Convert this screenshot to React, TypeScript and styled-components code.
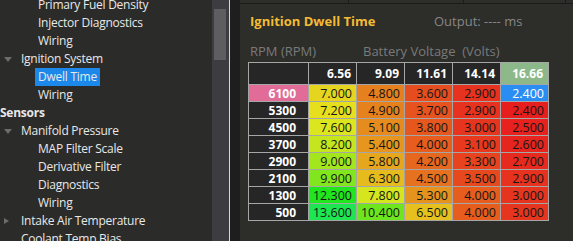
import React from "react";
import styled, { createGlobalStyle } from "styled-components";

const GlobalStyle = createGlobalStyle`
  html, body {
    margin: 0;
    padding: 0;
    background: #2b2b29;
  }
  body {
    font-family: "Open Sans", "Noto Sans", sans-serif;
  }
`;

type TreeItem = {
  label: string;
  level: 0 | 1 | 2;
  toggle?: "open" | "closed";
  selected?: boolean;
};

const tree: TreeItem[] = [
  { label: "Primary Fuel Density", level: 2 },
  { label: "Injector Diagnostics", level: 2 },
  { label: "Wiring", level: 2 },
  { label: "Ignition System", level: 1, toggle: "open" },
  { label: "Dwell Time", level: 2, selected: true },
  { label: "Wiring", level: 2 },
  { label: "Sensors", level: 0 },
  { label: "Manifold Pressure", level: 1, toggle: "open" },
  { label: "MAP Filter Scale", level: 2 },
  { label: "Derivative Filter", level: 2 },
  { label: "Diagnostics", level: 2 },
  { label: "Wiring", level: 2 },
  { label: "Intake Air Temperature", level: 1, toggle: "closed" },
  { label: "Coolant Temp Bias", level: 1 },
];

const voltages = ["6.56", "9.09", "11.61", "14.14", "16.66"];
const rows: { rpm: string; values: number[] }[] = [
  { rpm: "6100", values: [7.0, 4.8, 3.6, 2.9, 2.4] },
  { rpm: "5300", values: [7.2, 4.9, 3.7, 2.9, 2.4] },
  { rpm: "4500", values: [7.6, 5.1, 3.8, 3.0, 2.5] },
  { rpm: "3700", values: [8.2, 5.4, 4.0, 3.1, 2.6] },
  { rpm: "2900", values: [9.0, 5.8, 4.2, 3.3, 2.7] },
  { rpm: "2100", values: [9.9, 6.3, 4.5, 3.5, 2.9] },
  { rpm: "1300", values: [12.3, 7.8, 5.3, 4.0, 3.0] },
  { rpm: "500", values: [13.6, 10.4, 6.5, 4.0, 3.0] },
];

// operating point
const activeRow = 0;
const activeCol = 4;

const MIN = 2.4;
const MAX = 13.6;
const hueFor = (v: number) => ((v - MIN) / (MAX - MIN)) * 135;

export default function App() {
  return (
    <>
      <GlobalStyle />
      <Shell>
        <Sidebar>
          <TreeList>
            {tree.map((item, i) => (
              <TreeRow key={i} $level={item.level}>
                {item.level === 1 ? (
                  <Toggle>{item.toggle ? <Arrow $open={item.toggle === "open"} /> : null}</Toggle>
                ) : null}
                <TreeLabel $selected={!!item.selected} $bold={item.level === 0}>
                  {item.label}
                </TreeLabel>
              </TreeRow>
            ))}
          </TreeList>
        </Sidebar>
        <ScrollTrack>
          <ScrollThumb />
        </ScrollTrack>
        <Divider />
        <Gutter />
        <Panel>
          <TopStrip>
            <StripCell $w={108} />
            <StripCell $w={114} />
            <StripCell $w={101} />
            <StripCell $w={10} />
          </TopStrip>
          <PanelHeader>
            <Title>Ignition Dwell Time</Title>
            <Output>Output: ---- ms</Output>
          </PanelHeader>
          <AxisRow>
            <AxisLabel $w={113}>RPM (RPM)</AxisLabel>
            <AxisLabel>Battery Voltage  (Volts)</AxisLabel>
          </AxisRow>
          <Table>
            <HeadCell />
            {voltages.map((v, c) => (
              <HeadCell key={v} $active={c === activeCol}>
                {v}
              </HeadCell>
            ))}
            {rows.map((row, r) => (
              <React.Fragment key={row.rpm}>
                <RowLabel $active={r === activeRow}>{row.rpm}</RowLabel>
                {row.values.map((v, c) => (
                  <DataCell key={c} $hue={hueFor(v)} $active={r === activeRow && c === activeCol}>
                    {v.toFixed(3)}
                  </DataCell>
                ))}
              </React.Fragment>
            ))}
          </Table>
        </Panel>
      </Shell>
    </>
  );
}

const Shell = styled.div`
  display: flex;
  width: 573px;
  height: 241px;
  overflow: hidden;
  background: #2b2b29;
`;

const Sidebar = styled.div`
  width: 212px;
  flex-shrink: 0;
  overflow: hidden;
`;

const TreeList = styled.ul`
  list-style: none;
  margin: -4px 0 0;
  padding: 0;
`;

const TreeRow = styled.li<{ $level: number }>`
  display: flex;
  align-items: center;
  height: 18px;
  padding-left: ${(p) => (p.$level === 2 ? 35 : 0)}px;
  white-space: nowrap;
`;

const Toggle = styled.span`
  display: flex;
  align-items: center;
  justify-content: center;
  width: 15px;
  height: 18px;
  margin-right: 3px;
`;

const Arrow = styled.span<{ $open: boolean }>`
  width: 0;
  height: 0;
  ${(p) =>
    p.$open
      ? `border-left: 4px solid transparent;
         border-right: 4px solid transparent;
         border-top: 5px solid #6c6c6c;`
      : `border-top: 3.5px solid transparent;
         border-bottom: 3.5px solid transparent;
         border-left: 5px solid #6c6c6c;
         margin-left: -2px;`}
`;

const TreeLabel = styled.span<{ $selected: boolean; $bold: boolean }>`
  display: inline-block;
  height: 18px;
  line-height: 18px;
  padding: 0 3px;
  margin-left: ${(p) => (p.$bold ? -3 : 0)}px;
  font-size: 12px;
  letter-spacing: -0.25px;
  font-weight: ${(p) => (p.$bold ? 700 : 400)};
  color: #e8e8e8;
  background: ${(p) => (p.$selected ? "#1b88ea" : "transparent")};
`;

const ScrollTrack = styled.div`
  width: 17px;
  flex-shrink: 0;
  background: #3d3c41;
  display: flex;
  flex-direction: column;
  padding: 9px 3px 0 2px;
  box-sizing: border-box;
`;

const ScrollThumb = styled.div`
  height: 51px;
  background: #5e5e60;
`;

const Divider = styled.div`
  width: 1px;
  flex-shrink: 0;
  background: #d6d6d6;
`;

const Gutter = styled.div`
  width: 10px;
  flex-shrink: 0;
  background: #1e1e1e;
`;

const Panel = styled.div`
  flex: 1;
  display: flex;
  flex-direction: column;
  background: #2d2d2a;
  padding-left: 8px;
  min-width: 0;
`;

const TopStrip = styled.div`
  display: flex;
  height: 3px;
  margin-left: -8px;
  border-bottom: 1px solid #1b1b1b;
`;

const StripCell = styled.div<{ $w: number }>`
  width: ${(p) => p.$w}px;
  flex-shrink: 0;
  border-right: 1px solid #1b1b1b;
`;

const PanelHeader = styled.div`
  display: flex;
  align-items: center;
  height: 18px;
  margin-top: 8px;
  padding-left: 2px;
`;

const Title = styled.div`
  width: 184px;
  font-size: 13px;
  font-weight: 700;
  color: #f4bb34;
`;

const Output = styled.div`
  font-size: 13px;
  color: #868686;
`;

const AxisRow = styled.div`
  display: flex;
  align-items: center;
  height: 18px;
  margin-top: 12px;
  padding-left: 2px;
`;

const AxisLabel = styled.div<{ $w?: number }>`
  ${(p) => (p.$w ? `width: ${p.$w}px;` : "")}
  font-size: 13px;
  color: #7a7a7a;
  white-space: pre;
`;

const Table = styled.div`
  display: grid;
  grid-template-columns: 59px repeat(5, 47px);
  grid-template-rows: 21px repeat(8, 16px);
  gap: 1px;
  padding: 1px;
  width: max-content;
  margin-top: 2px;
  background: #a6a6a6;
`;

const HeadCell = styled.div<{ $active?: boolean }>`
  display: flex;
  align-items: center;
  justify-content: flex-end;
  padding-right: 5px;
  font-size: 12px;
  font-weight: 700;
  color: #ffffff;
  background: ${(p) => (p.$active ? "#8db98a" : "#262626")};
`;

const RowLabel = styled.div<{ $active: boolean }>`
  display: flex;
  align-items: center;
  justify-content: flex-end;
  padding-right: 12px;
  font-size: 12px;
  font-weight: 700;
  color: #ffffff;
  background: ${(p) => (p.$active ? "#e06c97" : "#262626")};
`;

const DataCell = styled.div<{ $hue: number; $active: boolean }>`
  display: flex;
  align-items: center;
  justify-content: flex-end;
  padding-right: 4px;
  font-size: 12.5px;
  color: ${(p) => (p.$active ? "#ffffff" : "#161616")};
  background: ${(p) => (p.$active ? "#2a8df2" : `hsl(${p.$hue.toFixed(0)}, 80%, 51%)`)};
`;
